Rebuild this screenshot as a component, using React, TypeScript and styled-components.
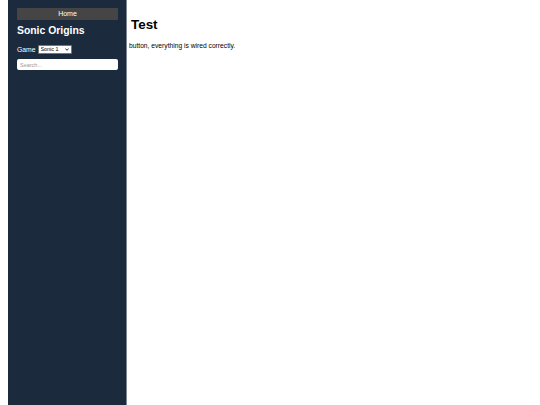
import styled, { createGlobalStyle } from "styled-components";

const GlobalStyle = createGlobalStyle`
    html, body {
        margin: 0;
        padding: 0;
        height: 100%;
        background: #ffffff;
        font-family: "Liberation Sans", Arial, sans-serif;
    }
    #root {
        height: 100%;
    }
`;

const Layout = styled.div`
    display: flex;
    height: 405px;
    padding-left: 8px;
    overflow: hidden;
`;

const Sidebar = styled.aside`
    box-sizing: border-box;
    width: 119px;
    flex-shrink: 0;
    padding: 8px 8px 0 9px;
    background: #1c2a3e;
    border-right: 1px solid #7c8591;
    color: #ffffff;
    display: flex;
    flex-direction: column;
`;

const HomeButton = styled.button`
    height: 12px;
    padding: 0;
    border: none;
    border-radius: 1px;
    background: #454545;
    color: #ffffff;
    font-family: inherit;
    font-size: 7px;
    line-height: 12px;
    cursor: pointer;
`;

const Title = styled.h2`
    margin: 5px 0 0;
    font-size: 10.4px;
    font-weight: bold;
    line-height: 12px;
`;

const GameRow = styled.label`
    display: flex;
    align-items: center;
    gap: 2px;
    margin-top: 8px;
    font-size: 6.8px;
`;

const SelectWrap = styled.span`
    position: relative;
    display: inline-flex;
`;

const GameSelect = styled.select`
    appearance: none;
    box-sizing: border-box;
    width: 34px;
    height: 9px;
    margin: 0;
    padding: 0 0 0 2px;
    border: 1px solid #767676;
    border-radius: 1px;
    background: #ffffff;
    color: #000000;
    font-family: inherit;
    font-size: 5.4px;
    line-height: 7px;
    outline: none;
`;

const Chevron = styled.svg`
    position: absolute;
    right: 3px;
    top: 3px;
    width: 4px;
    height: 3px;
    pointer-events: none;
`;

const SearchInput = styled.input`
    box-sizing: border-box;
    width: 101px;
    height: 11px;
    margin-top: 5px;
    padding: 0 3px;
    border: none;
    border-radius: 2px;
    background: #ffffff;
    font-family: inherit;
    font-size: 5.5px;

    &::placeholder {
        color: #9a9a9a;
    }
`;

const Main = styled.main`
    flex: 1;
    padding: 0 0 0 2px;
    color: #000000;
`;

const Heading = styled.h1`
    margin: 17px 0 0 2px;
    font-size: 13.4px;
    font-weight: bold;
    line-height: 15px;
`;

const Message = styled.p`
    margin: 10px 0 0;
    font-size: 6.7px;
    line-height: 8px;
`;

export default function App() {
    return (
        <>
            <GlobalStyle />
            <Layout>
                <Sidebar>
                    <HomeButton>Home</HomeButton>
                    <Title>Sonic Origins</Title>
                    <GameRow>
                        Game
                        <SelectWrap>
                            <GameSelect defaultValue="sonic1">
                                <option value="sonic1">Sonic 1</option>
                                <option value="sonic2">Sonic 2</option>
                                <option value="sonic3">Sonic 3</option>
                                <option value="sonicCD">Sonic CD</option>
                            </GameSelect>
                            <Chevron viewBox="0 0 4 3">
                                <path d="M0.4 0.5 L2 2.3 L3.6 0.5" fill="none" stroke="#000" strokeWidth="0.8" />
                            </Chevron>
                        </SelectWrap>
                    </GameRow>
                    <SearchInput placeholder="Search..." />
                </Sidebar>
                <Main>
                    <Heading>Test</Heading>
                    <Message>button, everything is wired correctly.</Message>
                </Main>
            </Layout>
        </>
    );
}
